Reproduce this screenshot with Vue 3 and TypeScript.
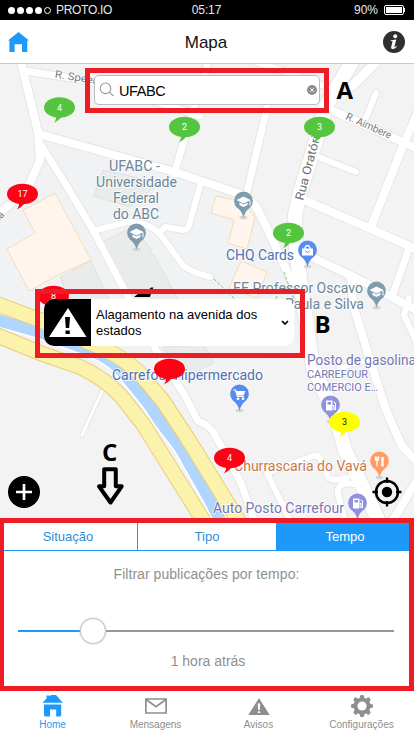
<script setup lang="ts">
import { ref } from 'vue'

interface Label { text: string; x: number; y: number; w: number; size: number; color: string; rotate?: number }
interface Pin { x: number; y: number; color: string; kind: string }
interface Bubble { x: number; y: number; color: string; text: string; ink?: string }

const roads = [
  { d: 'M21 62 L38 132 L40 160 L27 190 L-4 216', w: 8 },
  { d: 'M25 71 L85 80 L160 103 L200 116', w: 7 },
  { d: 'M208 62 L174 174', w: 7 },
  { d: 'M267 108 L247 192', w: 7 },
  { d: 'M256 62 L290 73 L335 90', w: 6 },
  { d: 'M39 134 L175 172 L240 194 Q252 199 258 210 L268 230 L292 282', w: 8 },
  { d: 'M41 145 L63 180 L93 230 L127 295 L156 350 L184 394 L198 421 Q211 426 215 435 L241 483 L254 520', w: 7 },
  { d: 'M93 231 L127 222 Q147 221 160 234 L182 264 Q188 271 210 277', w: 6 },
  { d: 'M161 231 L165 227 L183 230 Q188 230 189 225 L200 186', w: 6 },
  { d: 'M353 60 L327 104 L300 193 L295 215 L296 250 L303 300 L313 367 L337 420 L345 450 L364 490 L380 524', w: 14 },
  { d: 'M376 62 L352 86', w: 9 },
  { d: 'M331 110 L418 149', w: 8 },
  { d: 'M376 93 L366 118', w: 6 },
  { d: 'M418 112 L404 143 L371 227', w: 8 },
  { d: 'M316 156 L356 172', w: 6 },
  { d: 'M304 200 L371 229 L418 250', w: 8 },
  { d: 'M305 254 L354 277 L418 311', w: 8 },
  { d: 'M409 248 L393 294', w: 7 },
  { d: 'M351 278 L353 305 L371 363 L386 410 L402 446 L418 463', w: 8 },
  { d: 'M409 298 L404 315 L420 350', w: 6 },
  { d: 'M339 368 L372 359', w: 5 },
  { d: 'M290 520 L267 473 L313 456 Q319 454 321 460 L328 477 Q333 482 347 478', w: 6 },
  { d: 'M354 484 Q337 481 338 494 L345 520', w: 6 },
  { d: 'M103 389 L82 435', w: 3 },
  { d: 'M392 522 L418 478', w: 8 },
]
const river = 'M-6 319 L40 332 L90 350 Q110 358 122 371 L148 403 L160 421 L180 447 L210 500 L221 522'
const yellows = [
  'M-6 303 L40 320 L100 347 Q128 360 142 376 L163 401 L188 439 L241 525',
  'M-6 334 L40 353 L80 367 Q104 378 121 396 L143 424 L206 525',
]
const labels: Label[] = [
  { text: 'UFABC -', x: 109, y: 171, w: 51, size: 14, color: '#6b8696' },
  { text: 'Universidade', x: 96, y: 187, w: 81, size: 14, color: '#6b8696' },
  { text: 'Federal', x: 113, y: 203, w: 46, size: 14, color: '#6b8696' },
  { text: 'do ABC', x: 113, y: 219, w: 46, size: 14, color: '#6b8696' },
  { text: 'CHQ Cards', x: 226, y: 260, w: 68, size: 14, color: '#4e70b5' },
  { text: 'EE Professor Oscavo', x: 233, y: 293, w: 130, size: 14, color: '#6b8696' },
  { text: 'Paula e Silva', x: 285, y: 308.5, w: 79, size: 14, color: '#6b8696' },
  { text: 'Carrefour Hipermercado', x: 112, y: 380, w: 151, size: 14, color: '#4e70b5' },
  { text: 'Posto de gasolina', x: 307, y: 365, w: 109, size: 14, color: '#7576b5' },
  { text: 'CARREFOUR', x: 307, y: 378, w: 61, size: 10.5, color: '#7576b5' },
  { text: 'COMERCIO E…', x: 307, y: 391, w: 71, size: 10.5, color: '#7576b5' },
  { text: 'Churrascaria do Vavá', x: 234, y: 471, w: 133, size: 14, color: '#c9784b' },
  { text: 'Auto Posto Carrefour', x: 213, y: 513, w: 131, size: 14, color: '#7576b5' },
  { text: 'R. Speers', x: 54.5, y: 77.5, w: 48, size: 10.5, color: '#777b80', rotate: 9 },
  { text: 'R. Aimbere', x: 345, y: 119, w: 49, size: 10.5, color: '#777b80', rotate: 24 },
  { text: 'Rua Oratório', x: 303, y: 201, w: 74, size: 12, color: '#6d7175', rotate: -75 },
  { text: 'na', x: -3, y: 223, w: 11, size: 10.5, color: '#777b80', rotate: -44 },
]
const pins: Pin[] = [
  { x: 136.5, y: 233.5, color: '#7f9cae', kind: 'school' },
  { x: 243.5, y: 201.5, color: '#7f9cae', kind: 'school' },
  { x: 376.5, y: 291.5, color: '#7f9cae', kind: 'school' },
  { x: 307.5, y: 250.5, color: '#568cf0', kind: 'bag' },
  { x: 239.5, y: 394.5, color: '#568cf0', kind: 'cart' },
  { x: 330.5, y: 405.5, color: '#9090dd', kind: 'fuel' },
  { x: 357.5, y: 503.5, color: '#9090dd', kind: 'fuel' },
  { x: 379.5, y: 461.5, color: '#ff9d64', kind: 'food' },
]
const bubbles: Bubble[] = [
  { x: 59.5, y: 107.5, color: '#55c540', text: '4' },
  { x: 184.5, y: 127, color: '#55c540', text: '2' },
  { x: 319.5, y: 127, color: '#55c540', text: '3' },
  { x: 288.5, y: 233, color: '#55c540', text: '2' },
  { x: 22.5, y: 194, color: '#ff0015', text: '17' },
  { x: 53.5, y: 296, color: '#ff0015', text: '8' },
  { x: 169.5, y: 369, color: '#ff0015', text: '' },
  { x: 229.5, y: 458, color: '#ff0015', text: '4' },
  { x: 344.5, y: 422, color: '#ffff00', text: '3', ink: '#222' },
]

const filters = ['Situação', 'Tipo', 'Tempo']
const active = ref('Tempo')
const query = ref('UFABC')
const value = ref(20)
</script>

<template>
  <div class="screen">
    <header class="status">
      <div class="carrier"><i v-for="n in 5" :key="n" class="dot" :class="{ hollow: n === 5 }" /><span>PROTO.IO</span></div>
      <span class="clock">05:17</span>
      <div class="power"><span>90%</span><span class="battery"><i /></span></div>
    </header>

    <nav class="navbar">
      <svg width="21" height="20" viewBox="0 0 21 20"><path d="M10.5 0 L21 8.5 H19.3 V20 H14 V12.3 H6.6 V20 H1.4 V8.5 H0 Z" fill="#1d9af9" /></svg>
      <h1>Mapa</h1>
      <svg width="22" height="22" viewBox="0 0 22 22"><circle cx="11" cy="11" r="11" fill="#303030" /><circle cx="12.2" cy="5.2" r="2" fill="#fff" /><path d="M7.8 9.3 L13.3 8.4 L11.3 15.8 Q11.2 16.7 13.4 15 L13.9 15.5 Q11.5 18.4 9.2 18 Q7.7 17.6 8.2 15.8 L9.6 10.5 Q9.6 9.9 7.7 10 Z" fill="#fff" /></svg>
    </nav>

    <main class="map">
      <svg class="canvas" width="414" height="454" viewBox="0 64 414 454">
        <rect y="64" width="414" height="454" fill="#f3f3f3" />
        <path d="M39 136 L175 174 L240 196 L268 230 L298 290 L302 345 L240 365 L190 380 L150 350 L100 347 L0 303 V216 L27 190 L40 160 Z" fill="#f0f2f4" />
        <g fill="#eaebeb" stroke="#e0e1e1">
          <path d="M103 170 L94 196 L130 207 L160 183 Z" />
          <path d="M102 242 L133 227 L150 248 L152 254 L155 256 L178 300 H128 Z" />
          <path d="M60 277 L91 261 L109 300 H68 Z" />
          <path d="M163 347 L181 379 L214 363 L204 345 Z" />
        </g>
        <g fill="#fff5ec" stroke="#f6dcb9">
          <path d="M55 193 L23 210 L35 233 L7 249 L29 291 L60 274 L91 260 Z" />
          <path d="M216 196 L211 213 L234 220 L228 243 L247 249 L255 218 L244 202 Z" />
          <path d="M241 261 L267 272 L257 298 L229 288 Z" />
        </g>
        <g fill="none" stroke-linejoin="round" stroke-linecap="round">
          <path v-for="(r, i) in roads" :key="'c' + i" :d="r.d" :stroke-width="r.w + 2" stroke="#e5e6e7" />
          <path v-for="(r, i) in roads" :key="'r' + i" :d="r.d" :stroke-width="r.w" stroke="#fff" />
          <path d="M214 279 L238 302 M284 272 L295 302 M277 296 L273 306" stroke="#79c488" stroke-dasharray="3 2" stroke-linecap="butt" />
          <path :d="river" stroke="#fff" stroke-width="15" />
          <path :d="river" stroke="#b0d6ff" stroke-width="12" />
          <path v-for="y in yellows" :key="'e' + y" :d="y" stroke="#ebcd7d" stroke-width="16" />
          <path v-for="y in yellows" :key="'y' + y" :d="y" stroke="#fbf2ac" stroke-width="14" />
        </g>
        <text v-for="l in labels" :key="l.text" class="label" :x="l.x" :y="l.y" :font-size="l.size" :fill="l.color" :textLength="l.w" lengthAdjust="spacingAndGlyphs" :transform="`rotate(${l.rotate ?? 0} ${l.x} ${l.y})`">{{ l.text }}</text>
        <g v-for="(p, i) in pins" :key="i" :transform="`translate(${p.x} ${p.y})`">
          <ellipse cy="16" rx="4" ry="1.8" fill="#d6d6d6" />
          <path d="M0 16.5 Q-1.4 9.5 -6.7 6 A9.4 9.4 0 1 1 6.7 6 Q1.4 9.5 0 16.5Z" :fill="p.color" />
          <g v-if="p.kind === 'school'" fill="#fff"><path d="M-7 -1.5 L0 -5 L7 -1.5 L0 2Z M-4 1 L0 3 L4 1 V3.5 L0 5.5 L-4 3.5Z M6 -1 H7 V4 H6Z" /></g>
          <g v-else-if="p.kind === 'bag'"><path d="M-5.5 -2 H5.5 V5 H-5.5Z" fill="#fff" /><path d="M-2.5 -1 V-3 Q0 -7 2.5 -3 V-1" fill="none" stroke="#fff" stroke-width="1.3" /><path d="M-2 0 Q0 4 2 0" fill="none" :stroke="p.color" /></g>
          <g v-else-if="p.kind === 'cart'"><path d="M-6.5 -4.5 H-4 L-2 2 H4.5" fill="none" stroke="#fff" stroke-width="1.2" /><path d="M-4 -3.5 H6 L4 1 H-2Z" fill="#fff" /><circle cx="-1.5" cy="4.3" r="1.4" fill="#fff" /><circle cx="3.5" cy="4.3" r="1.4" fill="#fff" /></g>
          <g v-else-if="p.kind === 'fuel'"><path d="M-4.5 -5 H2 V5 H-4.5Z" fill="#fff" /><path d="M-3 -3.5 H.5 V-1 H-3Z" :fill="p.color" /><path d="M2 0 H3.4 V4 H5 V-2 L3.2 -4" fill="none" stroke="#fff" stroke-width="1.1" /></g>
          <g v-else fill="none" stroke="#fff"><path d="M-4 -5 V-1 M-2.5 -5 V5 M-1 -5 V-1 M-4 -1.5 H-1" stroke-width="1.3" /><path d="M3 -4.5 V5" stroke-width="2.5" /></g>
        </g>
        <g v-for="(b, i) in bubbles" :key="'b' + i" :transform="`translate(${b.x} ${b.y})`">
          <path d="M-3.5 8 Q-3 12.5 -5.8 15.5 Q-1 13.5 2.5 9Z" :fill="b.color" />
          <ellipse rx="15.5" ry="10.3" :fill="b.color" />
          <text class="count" y="3" :fill="b.ink ?? '#fff'">{{ b.text }}</text>
        </g>
        <path d="M134 297 Q138 293 144 292 L149 289.5 L151 287.5 H153.5 L152 290 L150 297Z" fill="#000" />
        <g transform="translate(24 492)"><circle r="16" fill="#000" /><path d="M-8 0 H8 M0 -8 V8" stroke="#fff" stroke-width="2.7" /></g>
        <g transform="translate(387 492)"><circle r="11" fill="none" stroke="#000" stroke-width="2.5" /><circle r="5.2" fill="#000" /><path d="M0 -14.5 V-9 M0 14.5 V9 M-14.5 0 H-9 M14.5 0 H9" stroke="#000" stroke-width="2.4" /></g>
        <path d="M104.2 469.3 H115.8 V486.3 H121.7 L110.5 502.5 L99 486.3 H104.2Z" fill="#f3f3f3" stroke="#000" stroke-width="4" stroke-linejoin="round" />
        <g class="mark"><text x="336.5" y="99">A</text><text x="314.5" y="333">B</text><text x="102" y="461">C</text></g>
      </svg>

      <div class="search">
        <div class="field">
          <svg width="16" height="16" viewBox="0 0 16 16" fill="none" stroke="#999" stroke-width="1.1"><circle cx="6.5" cy="6.3" r="5.3" /><path d="M10.3 10.2 L14.5 14" /></svg>
          <span>{{ query }}</span>
          <svg width="10" height="10" viewBox="0 0 10 10"><circle cx="5" cy="5" r="5" fill="#8f8f8f" /><path d="M3.3 3.3 L6.7 6.7 M6.7 3.3 L3.3 6.7" stroke="#fff" /></svg>
        </div>
      </div>

      <div class="alert">
        <div class="card">
          <div class="thumb"><svg width="38" height="30" viewBox="0 0 38 30"><path d="M19 0 L37.5 29 H0Z" fill="#fff" /><path d="M16 9 H21 L20.2 20 H16.8Z M16.5 22.5 H20.8 V26 H16.5Z" fill="#000" /></svg></div>
          <p>Alagamento na avenida dos estados</p>
          <svg width="8" height="6" viewBox="0 0 8 6" fill="none" stroke="#000" stroke-width="1.7"><path d="M1 1 L4 4 L7 1" /></svg>
        </div>
      </div>
    </main>

    <section class="panel">
      <div class="tabs"><button v-for="f in filters" :key="f" :class="{ on: f === active }" @click="active = f">{{ f }}</button></div>
      <p class="hint">Filtrar publicações por tempo:</p>
      <div class="slider"><div class="done" :style="{ width: value + '%' }" /><div class="knob" /><div class="rest" /></div>
      <p class="result">1 hora atrás</p>
    </section>

    <footer class="bottom">
      <a class="on"><svg width="22" height="22" viewBox="0 0 22 22" fill="currentColor"><path d="M4.5 .5 H7.8 V1.7 L9 0 H14 L20.8 7.8 H.5 L4.5 3.5Z M2 9.5 H19.2 V20 Q19.2 21.5 17.5 21.5 H14.2 V14.5 H8 V21.5 H3.5 Q2 21.5 2 20Z" /></svg><span>Home</span></a>
      <a><svg width="22" height="22" viewBox="0 0 22 22" fill="none" stroke="currentColor" stroke-width="1.7"><path d="M.9 4 H21.1 V18 H.9Z M1 4.5 L11 11.7 L21 4.5" /></svg><span>Mensagens</span></a>
      <a><svg width="22" height="22" viewBox="0 0 22 22"><path d="M11 3 L21.7 20 H.3Z" fill="currentColor" /><path d="M9.8 8.5 H12.2 L11.8 15 H10.2Z M9.9 16.2 H12.1 V18 H9.9Z" fill="#fff" /></svg><span>Avisos</span></a>
      <a><svg width="22" height="22" viewBox="0 0 22 22"><g fill="currentColor"><circle cx="11" cy="11" r="8.6" /><rect v-for="n in 8" :key="n" x="8.9" y="0" width="4.2" height="6" rx="1.5" :transform="`rotate(${n * 45} 11 11)`" /></g><circle cx="11" cy="11" r="4.6" fill="#fff" /></svg><span>Configurações</span></a>
    </footer>
  </div>
</template>

<style>
body { margin: 0; }
</style>

<style scoped>
.screen { width: 414px; height: 736px; display: flex; flex-direction: column; overflow: hidden; background: #fff; font-family: "Liberation Sans", sans-serif; }
p, h1 { margin: 0; font-weight: 400; }
.status { height: 20px; box-sizing: border-box; padding: 0 9px 0 8px; background: #000; color: #e8e8e8; display: grid; grid-template-columns: 1fr auto 1fr; align-items: center; font-size: 12px; }
.carrier { display: flex; align-items: center; gap: 2px; }
.carrier span { margin-left: 3px; letter-spacing: -.3px; }
.dot { width: 7px; height: 7px; border-radius: 50%; background: #fff; }
.dot.hollow { box-sizing: border-box; background: none; border: 1px solid #fff; }
.clock { letter-spacing: -.1px; }
.power { display: flex; justify-content: flex-end; align-items: center; gap: 6px; }
.battery { position: relative; box-sizing: border-box; width: 20px; height: 10px; border: 1px solid #fff; border-radius: 2px; padding: 1px; margin-right: 1px; }
.battery i { display: block; width: 16px; height: 6px; background: #fff; }
.battery::after { content: ""; position: absolute; right: -2px; top: 2px; width: 1px; height: 4px; background: #fff; }
.navbar { height: 44px; box-sizing: border-box; border-bottom: 1px solid #c8c8c8; padding: 0 9px 0 8px; display: flex; align-items: center; justify-content: space-between; }
.navbar h1 { font-size: 17px; line-height: 20px; padding-top: 2px; color: #111; }
.map { position: relative; height: 454px; }
.canvas { display: block; }
.label { font-family: Roboto, sans-serif; paint-order: stroke; stroke: #fff; stroke-opacity: .75; stroke-width: 2px; stroke-linejoin: round; }
.count { font-family: Roboto, sans-serif; font-size: 9px; text-anchor: middle; }
.mark { font-family: "Open Sans", "Noto Sans", sans-serif; font-weight: 700; font-size: 24px; }
.search { position: absolute; left: 85px; top: 4px; width: 244px; height: 45px; box-sizing: border-box; border: 5px solid #ee1c25; padding: 2px 4px 3px; }
.field { height: 30px; box-sizing: border-box; border: 1px solid #bdbdbd; border-radius: 5px; background: #fff; display: flex; align-items: center; padding: 0 2px 0 4px; }
.field span { flex: 1; margin-left: 4px; padding-top: 1px; font-size: 14.5px; letter-spacing: -.4px; }
.alert { position: absolute; left: 35px; top: 225px; width: 270px; height: 69px; box-sizing: border-box; border: 5px solid #ee1c25; padding: 5px 6px 7px 4px; }
.card { height: 47px; border-radius: 10px; overflow: hidden; background: #fff; display: flex; align-items: center; padding-right: 5px; }
.thumb { width: 47px; height: 47px; background: #000; display: flex; align-items: center; justify-content: center; }
.card p { flex: 1; margin-left: 5px; padding: 1px 12px 0 0; font-size: 13px; line-height: 16px; color: #000; }
.panel { height: 173px; box-sizing: border-box; border: 5px solid #ee1c25; border-left-width: 4px; display: flex; flex-direction: column; align-items: center; color: #8f8f8f; }
.tabs { width: 100%; height: 28px; box-sizing: border-box; border-bottom: 1px solid #1d9af9; display: grid; grid-template-columns: 134px 139px 1fr; }
.tabs button { border: 0; border-right: 1px solid #1d9af9; padding: 0 5px 0 0; background: #fff; font: 13px "Liberation Sans", sans-serif; color: #2b8fdc; }
.tabs button:nth-child(2) { padding-right: 0; }
.tabs button.on { background: #1d9af9; color: #fff; padding: 0 0 0 4px; border: 0; }
.hint { margin-top: 15px; font-size: 14px; line-height: 17px; letter-spacing: .05px; }
.slider { width: 376px; height: 28px; margin: 34px 1px 0 0; display: flex; align-items: center; }
.done { height: 2px; background: #1d9af9; margin-right: -13px; }
.knob { position: relative; width: 24px; height: 24px; border: 1px solid #c6c6c6; border-radius: 50%; background: #fff; box-shadow: 0 0 2px #bbb; }
.rest { flex: 1; height: 2px; background: #999; }
.result { margin: 8px 0 0 3px; font-size: 14px; line-height: 17px; }
.bottom { height: 45px; display: grid; grid-template-columns: 105px 101px 105px 101px; color: #8e8e8e; }
.bottom a { display: flex; flex-direction: column; align-items: center; padding-top: 4px; font-size: 10px; }
.bottom span { line-height: 12px; margin-top: 2px; }
.bottom .on { color: #1d9af9; }
</style>
